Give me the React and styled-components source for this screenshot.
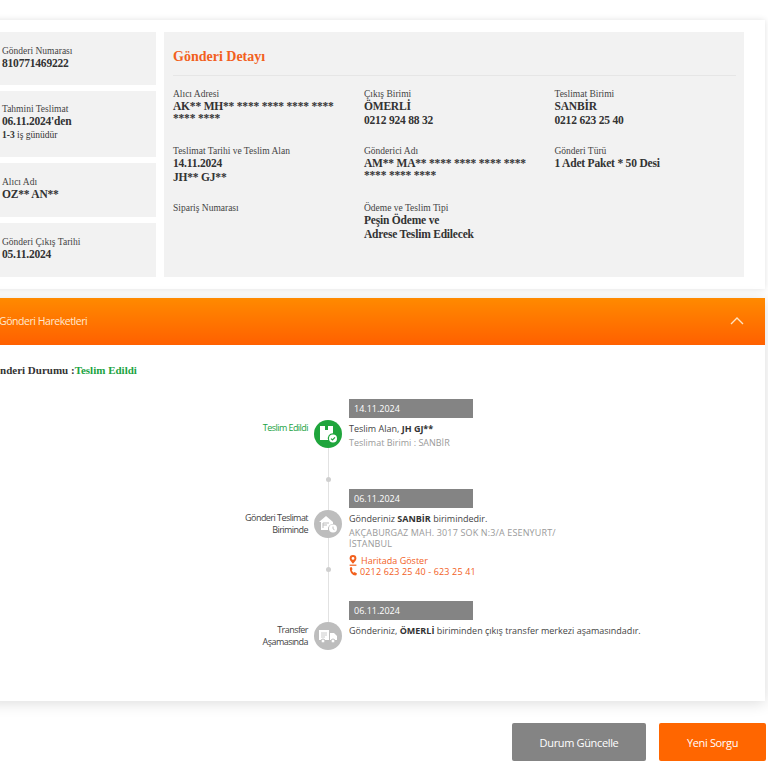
import React from "react";
import styled, { createGlobalStyle } from "styled-components";

const Global = createGlobalStyle`
  html, body { margin: 0; padding: 0; background: #fff; overflow: hidden; }
  * { box-sizing: border-box; }
`;
const Page = styled.div`
  width: 783px;
  height: 768px;
  margin-left: -15px;
  padding-top: 20px;
  overflow: hidden;
  display: flex;
  flex-direction: column;
`;
const TopCard = styled.section`
  background: #fff;
  width: 780px;
  height: 269px;
  padding: 12px 21px 12px 4px;
  display: grid;
  grid-template-columns: 167px 1fr;
  column-gap: 8px;
  box-shadow: 0 0 6px rgba(0, 0, 0, 0.12);
  font-family: "Liberation Serif", serif;
  color: #333;
`;
const Side = styled.div`
  display: grid;
  grid-template-rows: 53px 66px 54px 54px;
  row-gap: 6px;
`;
const SidePanel = styled.div`
  background: #f2f2f2;
  padding: 0 0 3px 13px;
  display: flex;
  flex-direction: column;
  justify-content: center;
`;
const Label = styled.div`
  font-size: 9.5px;
  line-height: 13px;
  margin-bottom: -2px;
  color: #444;
`;
const Value = styled.div`
  font-size: 11.5px;
  letter-spacing: -0.2px;
  font-weight: 700;
  line-height: 14px;
  color: #333;
`;
const Small = styled.div`
  font-size: 9.5px;
  line-height: 14px;
  color: #333;
  & b { font-weight: 700; }
`;
const Detail = styled.div`
  background: #f2f2f2;
  padding: 0 8px 0 9px;
`;
const Title = styled.h2`
  margin: 0;
  height: 44px;
  padding-top: 16px;
  font-size: 14px;
  line-height: 17px;
  font-weight: 700;
  color: #f2601d;
  border-bottom: 1px solid #e6e6e6;
`;
const Fields = styled.div`
  display: grid;
  grid-template-columns: 191px 190.5px 1fr;
  grid-template-rows: 57px 57px 57px;
  padding-top: 12px;
`;
const Field = styled.div`
  padding-right: 10px;
`;
const Masked = styled.div`
  font-size: 11.5px;
  letter-spacing: -0.2px;
  font-weight: 700;
  line-height: 12.5px;
  padding-top: 0.5px;
  width: 168px;
  color: #333;
`;
const Moves = styled.section`
  margin-top: 9px;
  height: 403px;
  width: 780px;
  background: #fff;
  box-shadow: 0 2px 14px rgba(0, 0, 0, 0.14);
`;
const MovesHead = styled.header`
  height: 47px;
  display: flex;
  align-items: center;
  justify-content: space-between;
  padding: 0 21px 2px 14px;
  background: linear-gradient(#ff8a00, #ff6000);
  color: #ffe9d0;
  font-family: "Open Sans", sans-serif;
  font-size: 10.5px;
  letter-spacing: -0.45px;
`;
const Status = styled.div`
  margin: 18px 0 0 1px;
  font-family: "Liberation Serif", serif;
  font-size: 11px;
  line-height: 14px;
  font-weight: 700;
  color: #333;
  & span { color: #20a33f; }
`;
const Timeline = styled.div`
  margin-top: 22px;
  display: flex;
  flex-direction: column;
  font-family: "Open Sans", sans-serif;
`;
const Entry = styled.article`
  display: grid;
  grid-template-columns: 329px 28px 1fr;
  grid-template-rows: 21px auto;
  height: ${(p) => p.$height}px;
`;
const DateCell = styled.div`
  grid-column: 3;
  grid-row: 1;
  margin-left: 7px;
`;
const DateBar = styled.div`
  width: 124px;
  height: 19px;
  padding-left: 5px;
  background: #848484;
  color: #fff;
  font-size: 9px;
  font-weight: 500;
  line-height: 19px;
`;
const StepLabel = styled.div`
  grid-column: 1;
  grid-row: 2;
  padding: 2px 6px 0 0;
  text-align: right;
  font-size: 9px;
  line-height: 12px;
  letter-spacing: -0.55px;
  color: ${(p) => p.$color || "#444"};
`;
const Rail = styled.div`
  grid-column: 2;
  grid-row: 1 / span 2;
  display: flex;
  flex-direction: column;
  align-items: center;
`;
const Lead = styled.span`
  flex: none;
  width: 1px;
  height: 21px;
  background: ${(p) => (p.$hidden ? "transparent" : "#e2e2e2")};
`;
const Dot = styled.span`
  flex: none;
  width: 28px;
  height: 28px;
  border-radius: 50%;
  background: ${(p) => p.$bg};
  display: flex;
  align-items: center;
  justify-content: center;
`;
const Line = styled.span`
  position: relative;
  flex: 1;
  width: 1px;
  background: #e2e2e2;
  &::after {
    content: "";
    position: absolute;
    left: -2px;
    top: ${(p) => p.$knob}px;
    width: 5px;
    height: 5px;
    border-radius: 50%;
    background: #cfcfcf;
  }
`;
const Content = styled.div`
  grid-column: 3;
  grid-row: 2;
  margin-left: 7px;
  padding-top: 3px;
  font-size: 9px;
  line-height: 11.5px;
  color: #444;
  & b { font-weight: 700; color: #333; }
`;
const Muted = styled.div`
  color: #9a9a9a;
  width: 214px;
  margin-top: 2px;
  letter-spacing: ${(p) => p.$spread || 0}px;
`;
const Action = styled.div`
  color: #f2601d;
  display: flex;
  align-items: center;
  gap: ${(p) => p.$gap}px;
  margin-top: ${(p) => p.$top || 0}px;
  letter-spacing: ${(p) => p.$spread || 0}px;
`;
const Buttons = styled.div`
  margin-top: 22px;
  width: 781px;
  display: flex;
  justify-content: flex-end;
  gap: 13px;
`;
const Button = styled.button`
  width: ${(p) => p.$w}px;
  height: 38px;
  border: 0;
  border-radius: 2px;
  background: ${(p) => p.$bg};
  color: #fff;
  font-family: "Open Sans", sans-serif;
  font-size: 11px;
  letter-spacing: -0.35px;
`;

const DeliveredIcon = () => (
  <svg width="20" height="20" viewBox="0 0 20 20" fill="#fff">
    <path d="M2 2h5v4h3V2h5v7.2a5 5 0 0 0-4.8 6.8H2z" />
    <circle cx="15" cy="14.5" r="4" />
    <path d="M13 14.6l1.5 1.4 2.5-2.7" fill="none" stroke="#1fa53c" strokeWidth="1.2" />
  </svg>
);
const BranchIcon = () => (
  <svg width="20" height="20" viewBox="0 0 20 20" fill="#fff">
    <path d="M1 8l7-6 7 6v2a5 5 0 0 0-5 6H3V8z" />
    <path d="M5 9h6M5 11h4M5 9v5" stroke="#bdbdbd" strokeWidth="1" fill="none" />
    <circle cx="15" cy="14.5" r="4" />
    <path d="M15 12.5v2.3l1.5 1" fill="none" stroke="#bdbdbd" strokeWidth="1" />
  </svg>
);
const TruckIcon = () => (
  <svg width="20" height="20" viewBox="0 0 20 20" fill="#fff">
    <path d="M1 4h10v10H1z" />
    <path d="M12 7h4l3 3v4h-7z" />
    <circle cx="5" cy="15" r="2" stroke="#bdbdbd" />
    <circle cx="15" cy="15" r="2" stroke="#bdbdbd" />
    <path d="M3 7h6M3 9h6M3 11h4" stroke="#bdbdbd" strokeWidth=".8" />
  </svg>
);
const PinIcon = () => (
  <svg width="8" height="11" viewBox="0 0 8 11" fill="#f2601d">
    <path fillRule="evenodd" d="M4 0a3.4 3.4 0 0 1 3.4 3.4C7.4 5.4 4 8.6 4 8.6S.6 5.4.6 3.4A3.4 3.4 0 0 1 4 0zm0 2a1.4 1.4 0 1 0 0 2.8A1.4 1.4 0 0 0 4 2z" />
    <rect x="0.6" y="9.6" width="6.8" height="1.2" />
  </svg>
);
const PhoneIcon = () => (
  <svg width="8" height="9" viewBox="0 0 8 9" fill="#f2601d">
    <path d="M1 .5L2.6 0l1 2.3-.9.8c.3 1 .9 1.9 1.9 2.6l1-.6L8 6.6 7.3 8.3C4 9.2.2 5 1 .5z" />
  </svg>
);
const Chevron = () => (
  <svg width="14" height="8" viewBox="0 0 14 8" fill="none" stroke="#ffe3c2" strokeWidth="1.4">
    <path d="M1 7l6-6 6 6" />
  </svg>
);

export default function App() {
  return (
    <Page>
      <Global />
      <TopCard>
        <Side>
          <SidePanel>
            <Label>Gönderi Numarası</Label>
            <Value>810771469222</Value>
          </SidePanel>
          <SidePanel>
            <Label>Tahmini Teslimat</Label>
            <Value>06.11.2024'den</Value>
            <Small><b>1-3</b> iş günüdür</Small>
          </SidePanel>
          <SidePanel>
            <Label>Alıcı Adı</Label>
            <Value>OZ** AN**</Value>
          </SidePanel>
          <SidePanel>
            <Label>Gönderi Çıkış Tarihi</Label>
            <Value>05.11.2024</Value>
          </SidePanel>
        </Side>
        <Detail>
          <Title>Gönderi Detayı</Title>
          <Fields>
            <Field>
              <Label>Alıcı Adresi</Label>
              <Masked>AK** MH** **** **** **** **** **** ****</Masked>
            </Field>
            <Field>
              <Label>Çıkış Birimi</Label>
              <Value>ÖMERLİ</Value>
              <Value>0212 924 88 32</Value>
            </Field>
            <Field>
              <Label>Teslimat Birimi</Label>
              <Value>SANBİR</Value>
              <Value>0212 623 25 40</Value>
            </Field>
            <Field>
              <Label>Teslimat Tarihi ve Teslim Alan</Label>
              <Value>14.11.2024</Value>
              <Value>JH** GJ**</Value>
            </Field>
            <Field>
              <Label>Gönderici Adı</Label>
              <Masked>AM** MA** **** **** **** **** **** **** ****</Masked>
            </Field>
            <Field>
              <Label>Gönderi Türü</Label>
              <Value>1 Adet Paket * 50 Desi</Value>
            </Field>
            <Field>
              <Label>Sipariş Numarası</Label>
            </Field>
            <Field>
              <Label>Ödeme ve Teslim Tipi</Label>
              <Value>Peşin Ödeme ve</Value>
              <Value>Adrese Teslim Edilecek</Value>
            </Field>
          </Fields>
        </Detail>
      </TopCard>

      <Moves>
        <MovesHead>
          <span>Gönderi Hareketleri</span>
          <Chevron />
        </MovesHead>
        <Status>Gönderi Durumu :<span>Teslim Edildi</span></Status>
        <Timeline>
          <Entry $height={90}>
            <DateCell><DateBar>14.11.2024</DateBar></DateCell>
            <StepLabel $color="#20a33f">Teslim Edildi</StepLabel>
            <Rail>
              <Lead $hidden />
              <Dot $bg="#1fa53c"><DeliveredIcon /></Dot>
              <Line $knob={29} />
            </Rail>
            <Content>
              Teslim Alan, <b>JH GJ**</b>
              <Muted>Teslimat Birimi : SANBİR</Muted>
            </Content>
          </Entry>
          <Entry $height={112}>
            <DateCell><DateBar>06.11.2024</DateBar></DateCell>
            <StepLabel>Gönderi Teslimat<br />Biriminde</StepLabel>
            <Rail>
              <Lead />
              <Dot $bg="#bdbdbd"><BranchIcon /></Dot>
              <Line $knob={29} />
            </Rail>
            <Content>
              Gönderiniz <b>SANBİR</b> birimindedir.
              <Muted $spread={0.15}>AKÇABURGAZ MAH. 3017 SOK N:3/A ESENYURT/ İSTANBUL</Muted>
              <Action $gap={4} $top={5}><PinIcon />Haritada Göster</Action>
              <Action $gap={3} $spread={0.15}><PhoneIcon />0212 623 25 40 - 623 25 41</Action>
            </Content>
          </Entry>
          <Entry $height={60}>
            <DateCell><DateBar>06.11.2024</DateBar></DateCell>
            <StepLabel>Transfer<br />Aşamasında</StepLabel>
            <Rail>
              <Lead />
              <Dot $bg="#bdbdbd"><TruckIcon /></Dot>
            </Rail>
            <Content>
              Gönderiniz, <b>ÖMERLİ</b> biriminden çıkış transfer merkezi aşamasındadır.
            </Content>
          </Entry>
        </Timeline>
      </Moves>

      <Buttons>
        <Button $w={134} $bg="#848484">Durum Güncelle</Button>
        <Button $w={107} $bg="#ff6600">Yeni Sorgu</Button>
      </Buttons>
    </Page>
  );
}
